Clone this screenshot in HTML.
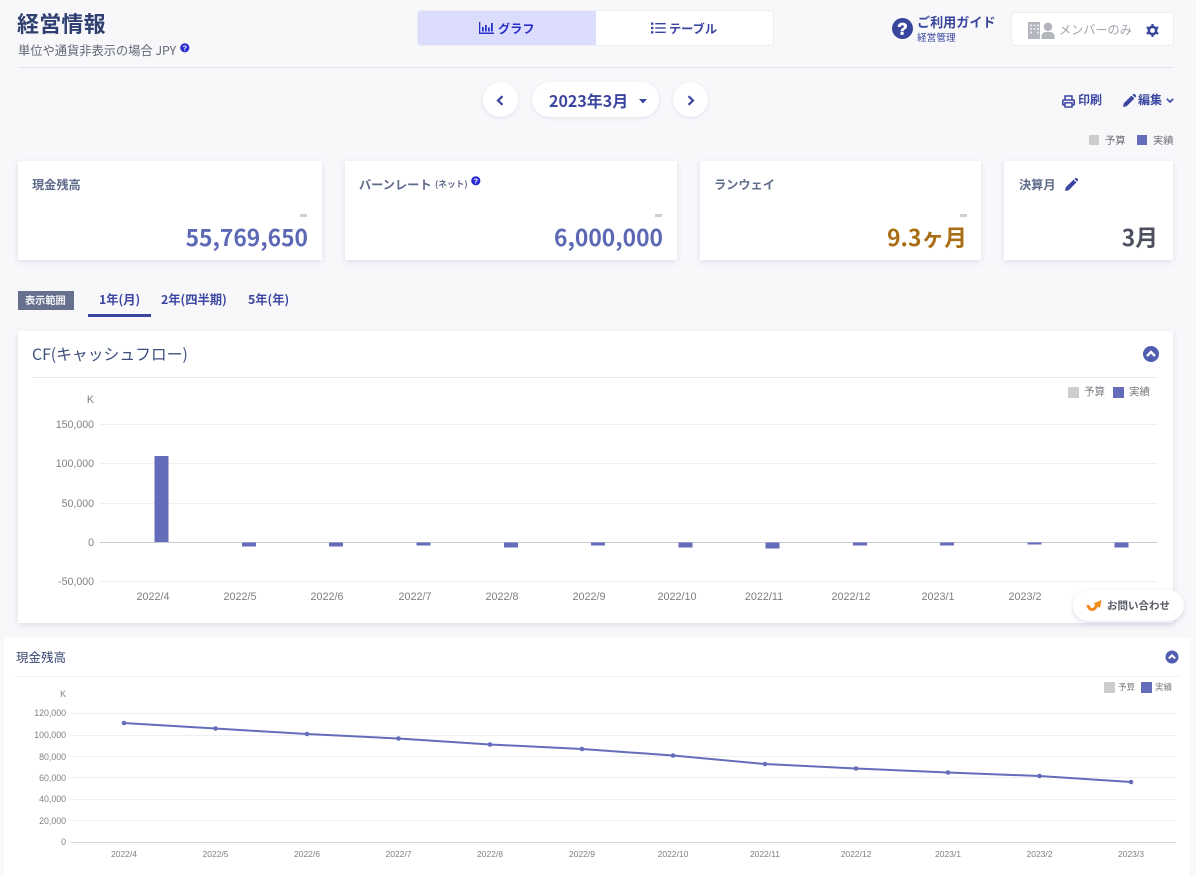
<!DOCTYPE html>
<html lang="ja"><head><meta charset="utf-8"><title>経営情報</title>
<style>
html,body{margin:0;padding:0;width:1196px;height:876px;overflow:hidden;background:#f8f8fb}
body{position:relative;font-family:"Liberation Sans","Noto Sans CJK JP",sans-serif;filter:blur(.35px)}
.t{position:absolute;white-space:nowrap;line-height:1;font-family:"Noto Sans CJK JP","Liberation Sans",sans-serif}
.b{font-weight:700}
.box{position:absolute;background:#fff}
.card{box-shadow:0 2px 6px rgba(60,70,120,.14)}
.r{text-align:right}
svg{position:absolute;overflow:visible}
svg text{font-family:"Liberation Sans",sans-serif}
</style></head><body>

<div class="t b" style="left:17px;top:12px;font-size:22px;color:#2f4070;letter-spacing:.2px">経営情報</div>
<div class="t" style="left:18px;top:43.500px;font-size:12.250px;color:#5f6674">単位や通貨非表示の場合 JPY</div>
<svg style="left:179.500px;top:42.500px" width="10" height="10"><circle cx="4.800" cy="4.800" r="4.600" fill="#2a2ed0"/><text x="4.800" y="7.600" font-size="7.500" font-weight="700" fill="#fff" text-anchor="middle">?</text></svg>
<div style="position:absolute;left:18px;top:67px;width:1155px;height:1px;background:#e2e3ea"></div>

<div class="box" style="left:418px;top:10.500px;width:355px;height:34px;border-radius:3px;box-shadow:0 0 0 1px #ecedf2"></div>
<div style="position:absolute;left:418px;top:10.500px;width:178px;height:34px;background:#dcdcfd;border-radius:3px 0 0 3px"></div>
<svg style="left:479px;top:22px" width="15" height="12" fill="#2730c8"><path d="M0 0h1.300v10.500H15V12H0z"/><rect x="3" y="5" width="1.800" height="4.500"/><rect x="6" y="3" width="1.800" height="6.500"/><rect x="9" y="5.500" width="1.800" height="4"/><rect x="12" y="1" width="1.800" height="8.500"/></svg>
<div class="t b" style="left:498px;top:22px;font-size:12.200px;color:#2730c8">グラフ</div>
<svg style="left:651px;top:22px" width="15" height="12" fill="#3b46a0"><rect x="0" y="0.500" width="2.400" height="2.400"/><rect x="0" y="4.800" width="2.400" height="2.400"/><rect x="0" y="9.100" width="2.400" height="2.400"/><rect x="4.200" y="1" width="10.500" height="1.400"/><rect x="4.200" y="5.300" width="10.500" height="1.400"/><rect x="4.200" y="9.600" width="10.500" height="1.400"/></svg>
<div class="t b" style="left:669px;top:22px;font-size:12.200px;color:#3b46a0">テーブル</div>

<svg style="left:892px;top:18px" width="21" height="21"><circle cx="10.500" cy="10.500" r="10.500" fill="#38459c"/><text x="10.500" y="16.500" font-size="17" font-weight="700" fill="#fff" stroke="#fff" stroke-width=".7" text-anchor="middle">?</text></svg>
<div class="t b" style="left:917px;top:15px;font-size:13.100px;color:#38459c">ご利用ガイド</div>
<div class="t" style="left:917px;top:33px;font-size:9.700px;color:#38459c">経営管理</div>

<div class="box" style="left:1011.500px;top:12.500px;width:161px;height:32px;border-radius:3px;box-shadow:0 0 0 1px #ecedf2"></div>
<svg style="left:1026.500px;top:21.500px" width="29" height="18" fill="#b4b6bd"><path d="M1 0h12v17H1z"/><g fill="#e6e7ea"><rect x="3" y="2.500" width="2" height="2"/><rect x="6.500" y="2.500" width="2" height="2"/><rect x="10" y="2.500" width="2" height="2"/><rect x="3" y="6" width="2" height="2"/><rect x="6.500" y="6" width="2" height="2"/><rect x="10" y="6" width="2" height="2"/><rect x="3" y="9.500" width="2" height="2"/><rect x="10" y="9.500" width="2" height="2"/></g><circle cx="21" cy="4.800" r="4.300"/><path d="M14.500 17v-2.500c0-3 2-4.500 4-4.500h5c2 0 4 1.500 4 4.500V17z"/></svg>
<div class="t" style="left:1059px;top:23.500px;font-size:12.150px;color:#a2a4ac">メンバーのみ</div>
<svg style="left:1146px;top:24px" width="13" height="13" viewBox="0 0 13 13"><circle cx="6.500" cy="6.500" r="3.700" fill="none" stroke="#38459c" stroke-width="2.600"/><g stroke="#38459c" stroke-width="2.200"><path d="M6.500 0v2.500M6.500 10.500V13M.8 3.200l2.200 1.300M10 8.500l2.200 1.300M.8 9.800L3 8.500M10 4.500l2.200-1.300"/></g></svg>

<div class="box" style="left:483px;top:82px;width:35px;height:35px;border-radius:50%;box-shadow:0 1px 4px rgba(60,70,120,.13)"></div>
<svg style="left:496px;top:95px" width="8" height="11"><path d="M6.500 1.200L2 5.500l4.500 4.300" fill="none" stroke="#3b46a0" stroke-width="2.200"/></svg>
<div class="box" style="left:532px;top:82px;width:127px;height:35px;border-radius:18px;box-shadow:0 1px 4px rgba(60,70,120,.13)"></div>
<div class="t b" style="left:549px;top:92px;font-size:16px;color:#3b46a0">2023年3月</div>
<svg style="left:639px;top:98.500px" width="8" height="5"><path d="M0 0h8L4 4.500z" fill="#3b46a0"/></svg>
<div class="box" style="left:673px;top:82px;width:35px;height:35px;border-radius:50%;box-shadow:0 1px 4px rgba(60,70,120,.13)"></div>
<svg style="left:687px;top:95px" width="8" height="11"><path d="M1.500 1.200L6 5.500l-4.500 4.300" fill="none" stroke="#3b46a0" stroke-width="2.200"/></svg>

<svg style="left:1062px;top:94.500px" width="13" height="13"><path d="M3 5V1h7v4" fill="none" stroke="#3b46a0" stroke-width="1.500"/><rect x=".8" y="5" width="11.400" height="5" rx="1" fill="none" stroke="#3b46a0" stroke-width="1.600"/><rect x="3" y="7.800" width="7" height="4.200" fill="#fff" stroke="#3b46a0" stroke-width="1.500"/></svg>
<div class="t b" style="left:1078px;top:94px;font-size:12px;color:#3b46a0">印刷</div>
<svg style="left:1123px;top:94px" width="13" height="13" fill="#3b46a0"><path d="M0 13l.8-3.700L8.500 1.600l2.900 2.900L3.700 12.200zM9.400.8l1-.8c.5-.3 1-.2 1.400.1l1.100 1.100c.3.400.3 1 0 1.400l-.8 1z"/></svg>
<div class="t b" style="left:1138px;top:94px;font-size:12px;color:#3b46a0">編集</div>
<svg style="left:1166px;top:98px" width="8" height="6"><path d="M.8.8L4 4l3.200-3.200" fill="none" stroke="#3b46a0" stroke-width="1.600"/></svg>

<div style="position:absolute;left:1089px;top:135px;width:10px;height:10px;background:#cdcdcf"></div>
<div class="t" style="left:1105px;top:135px;font-size:10.300px;color:#6b6e76">予算</div>
<div style="position:absolute;left:1137px;top:135px;width:10px;height:10px;background:#656dbb"></div>
<div class="t" style="left:1153px;top:135px;font-size:10.300px;color:#6b6e76">実績</div>

<div class="box card" style="left:18px;top:161px;width:304px;height:99px"></div>
<div class="t b" style="left:32px;top:177.500px;font-size:12.200px;color:#5f6b8a">現金残高</div>
<div style="position:absolute;left:300px;top:214px;width:7px;height:2.500px;background:#cfd0d3"></div>
<div class="t b r" style="right:888px;top:226px;font-size:22.800px;color:#5d68b5">55,769,650</div>

<div class="box card" style="left:345px;top:161px;width:332px;height:99px"></div>
<div class="t b" style="left:359px;top:177.500px;font-size:12.200px;color:#5f6b8a">バーンレート</div>
<div class="t b" style="left:435px;top:179.500px;font-size:8.700px;color:#5f6b8a">(ネット)</div>
<svg style="left:471px;top:176px" width="10" height="10"><circle cx="4.800" cy="4.800" r="4.600" fill="#2a2ed0"/><text x="4.800" y="7.600" font-size="7.500" font-weight="700" fill="#fff" text-anchor="middle">?</text></svg>
<div style="position:absolute;left:655px;top:214px;width:7px;height:2.500px;background:#cfd0d3"></div>
<div class="t b r" style="right:533px;top:226px;font-size:22.800px;color:#5d68b5">6,000,000</div>

<div class="box card" style="left:700px;top:161px;width:281px;height:99px"></div>
<div class="t b" style="left:714px;top:177.500px;font-size:12.200px;color:#5f6b8a">ランウェイ</div>
<div style="position:absolute;left:960px;top:214px;width:7px;height:2.500px;background:#cfd0d3"></div>
<div class="t b r" style="right:229px;top:226px;font-size:22.800px;color:#a96d14">9.3ヶ月</div>

<div class="box card" style="left:1004px;top:161px;width:169px;height:99px"></div>
<div class="t b" style="left:1019px;top:177.500px;font-size:12.200px;color:#5f6b8a">決算月</div>
<svg style="left:1065px;top:178px" width="13" height="13" fill="#3b46a0"><path d="M0 13l.8-3.700L8.500 1.600l2.900 2.900L3.700 12.200zM9.400.8l1-.8c.5-.3 1-.2 1.400.1l1.100 1.100c.3.400.3 1 0 1.400l-.8 1z"/></svg>
<div class="t b r" style="right:38px;top:226px;font-size:22.800px;color:#4c4f5e">3月</div>

<div style="position:absolute;left:18px;top:291px;width:56px;height:19px;background:#67708d"></div>
<div class="t b" style="left:25px;top:295px;font-size:10.200px;color:#f2f3f7">表示範囲</div>
<div class="t b" style="left:99px;top:292.500px;font-size:12.300px;color:#3b46a0">1年(月)</div>
<div style="position:absolute;left:88px;top:314px;width:63px;height:3px;background:#3b46a0"></div>
<div class="t b" style="left:161px;top:292.500px;font-size:12.300px;color:#3b46a0">2年(四半期)</div>
<div class="t b" style="left:248px;top:292.500px;font-size:12.300px;color:#3b46a0">5年(年)</div>

<div class="box card" style="left:18px;top:331px;width:1155px;height:292px"></div>
<div class="t" style="left:32px;top:346px;font-size:15.800px;color:#3d4f7c">CF(キャッシュフロー)</div>
<svg style="left:1143px;top:346px" width="16" height="16"><circle cx="8" cy="8" r="8" fill="#4f5cb0"/><path d="M4 10l4-4 4 4" fill="none" stroke="#fff" stroke-width="2.400"/></svg>
<div style="position:absolute;left:32px;top:377px;width:1125px;height:1px;background:#e9eaee"></div>
<div style="position:absolute;left:1068px;top:387px;width:11px;height:11px;background:#cdcdcf"></div>
<div class="t" style="left:1084px;top:387px;font-size:10.500px;color:#777a80">予算</div>
<div style="position:absolute;left:1113px;top:387px;width:11px;height:11px;background:#656dbb"></div>
<div class="t" style="left:1129px;top:387px;font-size:10.500px;color:#777a80">実績</div>

<svg style="left:0;top:0" width="1196" height="640">
<g stroke="#eeeff2" stroke-width="1"><path d="M100 424.500H1157M100 463.500H1157M100 503.500H1157M100 581.500H1157"/></g>
<path d="M100 542.500H1157" stroke="#c9cbd2" stroke-width="1"/>
<g fill="#7d7f84" font-size="10.600" text-anchor="end"><text x="94" y="403">K</text><text x="94" y="428">150,000</text><text x="94" y="467">100,000</text><text x="94" y="507">50,000</text><text x="94" y="546">0</text><text x="94" y="585">-50,000</text></g>
<g fill="#656dbb"><rect x="154.500" y="456" width="14" height="86"/><rect x="242" y="542.500" width="14" height="4"/><rect x="329" y="542.500" width="14" height="4"/><rect x="416.500" y="542.500" width="14" height="3"/><rect x="504" y="542.500" width="14" height="5"/><rect x="591" y="542.500" width="14" height="3"/><rect x="678.500" y="542.500" width="14" height="5"/><rect x="765.500" y="542.500" width="14" height="6"/><rect x="853" y="542.500" width="14" height="3"/><rect x="940" y="542.500" width="14" height="3"/><rect x="1027.500" y="542.500" width="14" height="2"/><rect x="1114.500" y="542.500" width="14" height="5"/></g>
<g fill="#7d7f84" font-size="10.800" text-anchor="middle"><text x="153" y="600">2022/4</text><text x="240" y="600">2022/5</text><text x="327" y="600">2022/6</text><text x="415" y="600">2022/7</text><text x="502" y="600">2022/8</text><text x="589" y="600">2022/9</text><text x="677" y="600">2022/10</text><text x="764" y="600">2022/11</text><text x="851" y="600">2022/12</text><text x="938" y="600">2023/1</text><text x="1025" y="600">2023/2</text></g>
</svg>

<div class="box" style="left:4px;top:638px;width:1186px;height:238px"></div>
<div class="t" style="left:16px;top:651px;font-size:12.500px;color:#3a4672">現金残高</div>
<svg style="left:1165px;top:650px" width="14" height="14"><circle cx="7" cy="7" r="6.500" fill="#4f5cb0"/><path d="M3.800 8.500L7 5.300l3.200 3.200" fill="none" stroke="#fff" stroke-width="2"/></svg>
<div style="position:absolute;left:15px;top:676px;width:1165px;height:1px;background:#f3f3f6"></div>
<div style="position:absolute;left:1104px;top:682px;width:11px;height:11px;background:#cdcdcf"></div>
<div class="t" style="left:1118px;top:683px;font-size:8.500px;color:#777a80">予算</div>
<div style="position:absolute;left:1141px;top:682px;width:11px;height:11px;background:#656dbb"></div>
<div class="t" style="left:1155px;top:683px;font-size:8.500px;color:#777a80">実績</div>

<svg style="left:0;top:640px" width="1196" height="236">
<g stroke="#eeeff2"><path d="M71 73.500H1176M71 95.500H1176M71 116.500H1176M71 137.500H1176M71 159.500H1176M71 180.500H1176"/></g>
<path d="M71 202.500H1176" stroke="#d5d6db"/>
<g fill="#7d7f84" font-size="8.800" text-anchor="end"><text x="66" y="57">K</text><text x="66" y="76">120,000</text><text x="66" y="98">100,000</text><text x="66" y="120">80,000</text><text x="66" y="141">60,000</text><text x="66" y="162">40,000</text><text x="66" y="184">20,000</text><text x="66" y="205">0</text></g>
<polyline points="124,83 215.500,88.500 307,94 398.500,98.500 490,104.500 582,109 673,115.500 765,124 856,128.500 948,132.500 1039.500,136 1131,142" fill="none" stroke="#656dbb" stroke-width="2"/>
<g fill="#656dbb"><circle cx="124" cy="83" r="2.300"/><circle cx="215.500" cy="88.500" r="2.300"/><circle cx="307" cy="94" r="2.300"/><circle cx="398.500" cy="98.500" r="2.300"/><circle cx="490" cy="104.500" r="2.300"/><circle cx="582" cy="109" r="2.300"/><circle cx="673" cy="115.500" r="2.300"/><circle cx="765" cy="124" r="2.300"/><circle cx="856" cy="128.500" r="2.300"/><circle cx="948" cy="132.500" r="2.300"/><circle cx="1039.500" cy="136" r="2.300"/><circle cx="1131" cy="142" r="2.300"/></g>
<g fill="#7d7f84" font-size="8.500" text-anchor="middle"><text x="124" y="217">2022/4</text><text x="215.500" y="217">2022/5</text><text x="307" y="217">2022/6</text><text x="398.500" y="217">2022/7</text><text x="490" y="217">2022/8</text><text x="582" y="217">2022/9</text><text x="673" y="217">2022/10</text><text x="765" y="217">2022/11</text><text x="856" y="217">2022/12</text><text x="948" y="217">2023/1</text><text x="1039.500" y="217">2023/2</text><text x="1131" y="217">2023/3</text></g>
</svg>

<div class="box" style="left:1073px;top:590px;width:111px;height:31px;border-radius:16px;box-shadow:0 2px 6px rgba(60,70,120,.16)"></div>
<svg style="left:1086px;top:599px" width="17" height="14"><path d="M2 6c.3 3.500 3.500 5.500 6 4 1.800-1.100 2.500-3 3.200-5" fill="none" stroke="#f28a1c" stroke-width="3"/><path d="M7.500 4.500L15.500 1l-1.500 8z" fill="#f28a1c"/></svg>
<div class="t b" style="left:1107px;top:600.500px;font-size:10.500px;color:#5a5d68">お問い合わせ</div>
</body></html>
